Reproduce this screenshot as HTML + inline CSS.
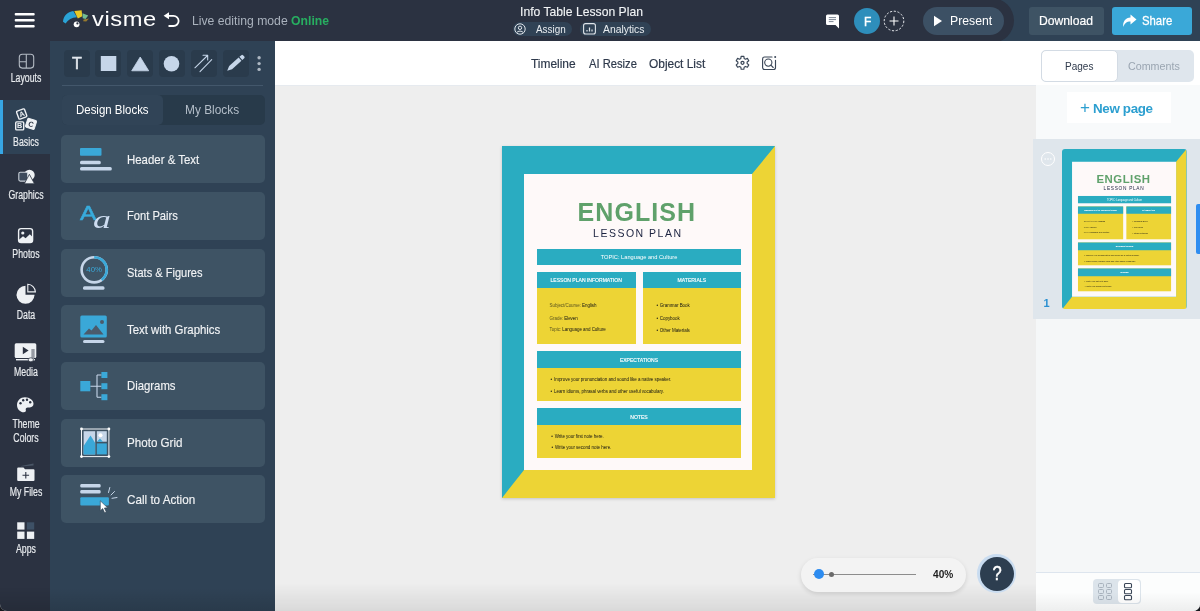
<!DOCTYPE html>
<html lang="en">
<head>
<meta charset="utf-8">
<title>Info Table Lesson Plan</title>
<style>
*{box-sizing:border-box;margin:0;padding:0}
html,body{width:1200px;height:611px;overflow:hidden;background:#16181d;font-family:"Liberation Sans",sans-serif;}
.abs{position:absolute}
#wrap{position:absolute;left:0;top:0;width:1200px;height:611px;will-change:transform}
#app{position:relative;width:1200px;height:611px;overflow:hidden;background:#eeeeee;border-radius:0 0 7px 7px}
/* top bar */
#top{position:absolute;left:0;top:0;width:1200px;height:41px;background:#2f4255;overflow:hidden}
#topdark{position:absolute;left:0;top:-2px;width:1013.5px;height:45px;background:#2b3241;border-radius:0 22.5px 22.5px 0}
.t{position:absolute;white-space:nowrap;line-height:1;transform-origin:0 0}
/* rail */
#rail{position:absolute;left:0;top:41px;width:50px;height:570px;background:#2b3241}
.rl{position:absolute;left:1.1px;width:50px;text-align:center;color:#e8ebee;font-size:12.5px;line-height:1;white-space:nowrap;transform:scaleX(.7);transform-origin:25px 50%;-webkit-text-stroke:.2px #e8ebee}
.bl{font-size:7px;font-weight:700;color:#eef1f4;width:6px;text-align:center}
/* panel */
#panel{position:absolute;left:50px;top:41px;width:225px;height:570px;background:#2f4255}
.tb{position:absolute;top:9px;width:26px;height:27px;border-radius:4px;background:#2a3b4c}
.blk{position:absolute;left:11px;width:203.5px;height:48px;border-radius:5px;background:#3e5364}
.blk span{position:absolute;left:65.8px;top:16.7px;font-size:12.7px;line-height:16px;color:#f1f3f5;white-space:nowrap;transform-origin:0 50%;-webkit-text-stroke:.15px #f1f3f5}
/* toolbar */
#bar{position:absolute;left:275px;top:41px;width:925px;height:44px;background:#fff}
#right{position:absolute;left:1036px;top:85px;width:164px;height:526px;background:#f5f7f8}
/* document */
.teal{background:#2aacc1}
.yel{background:#edd435}
.dw{color:#fff;text-align:center}
.db{font-size:4.5px;letter-spacing:-.05px;color:#141414}
.db i{font-style:normal;color:#5b5520;-webkit-text-stroke:0}
.db u{text-decoration:none;display:inline-block;width:3.4px}
.dt{position:absolute;white-space:nowrap;line-height:1;font-family:"Liberation Sans",sans-serif}
</style>
</head>
<body>
<div id="app"><div id="wrap">

<!-- TOP BAR -->
<div id="top"><div id="topdark"></div>
  <svg class="abs" style="left:14px;top:13px" width="22" height="15" viewBox="0 0 22 15"><rect x=".7" y="0" width="20" height="2.6" rx="1" fill="#fff"/><rect x=".7" y="6" width="20" height="2.6" rx="1" fill="#fff"/><rect x=".7" y="12" width="20" height="2.6" rx="1" fill="#fff"/></svg>
  <!-- logo -->
  <svg class="abs" style="left:60px;top:8px" width="32" height="22" viewBox="60 8 32 22">
    <path d="M63 21.8 C63.3 16 67.5 11.8 73.3 11 L77 17.3 C71.8 17.6 68 19.8 65.6 23.5 Z" fill="#2aa3d6"/>
    <path d="M74.3 10.9 L81.6 10.3 L82.3 16.2 L77.8 18.5 Z" fill="#e8c926"/>
    <path d="M82.5 13.3 L88.2 15.5 L85.6 19 L82.7 18.3 Z" fill="#74bd92"/>
    <path d="M83.6 19.4 L89 18.5 L86.3 21.6 L83.2 21.3 Z" fill="#96792f"/>
    <circle cx="76.6" cy="24.3" r="2.9" fill="#fff"/><circle cx="77.4" cy="23.4" r="1.1" fill="#2b3241"/>
  </svg>
  <div class="t" style="left:92.4px;top:9.8px;font-size:19.5px;color:#fff;letter-spacing:.5px;transform:scaleX(1.215)">visme</div>
  <svg class="abs" style="left:163px;top:12px" width="18" height="17" viewBox="0 0 18 17"><path d="M5 3.8 H10.5 A5 5 0 0 1 10.5 14 H5.5" fill="none" stroke="#fff" stroke-width="1.8"/><path d="M0.6 3.8 L6 0.3 V7.3 Z" fill="#fff"/></svg>
  <div class="t" style="left:191.6px;top:15px;font-size:12.7px;transform:scaleX(.962);color:#aab2bd">Live editing mode <b style="color:#27ae60">Online</b></div>

  <div class="t" style="left:519.6px;top:5.8px;font-size:12.8px;transform:scaleX(0.951);color:#f2f4f6;-webkit-text-stroke:.12px #f2f4f6">Info Table Lesson Plan</div>
  <div class="abs" style="left:513px;top:22px;width:59px;height:14px;border-radius:7px;background:#304255"></div>
  <div class="abs" style="left:580px;top:22px;width:71px;height:14px;border-radius:7px;background:#304255"></div>
  <svg class="abs" style="left:514px;top:23px" width="12" height="12" viewBox="0 0 12 12"><circle cx="6" cy="6" r="5.2" fill="none" stroke="#dfe4ea" stroke-width="1"/><circle cx="6" cy="4.8" r="1.7" fill="none" stroke="#dfe4ea" stroke-width="1"/><path d="M2.8 9.6 C3.5 7.6 8.5 7.6 9.2 9.6" fill="none" stroke="#dfe4ea" stroke-width="1"/></svg>
  <div class="t" style="left:536.3px;top:24px;font-size:10.5px;transform:scaleX(0.942);color:#e9edf1">Assign</div>
  <svg class="abs" style="left:583px;top:23px" width="13" height="12" viewBox="0 0 13 12"><rect x=".6" y=".6" width="11.8" height="10.4" rx="2" fill="none" stroke="#dfe4ea" stroke-width="1.1"/><path d="M4 8.5V7M6.5 8.5V4.5M9 8.5V6.5" stroke="#dfe4ea" stroke-width="1.2"/></svg>
  <div class="t" style="left:603px;top:24px;font-size:10.5px;transform:scaleX(0.987);color:#e9edf1">Analytics</div>

  <!-- comment icon -->
  <svg class="abs" style="left:826px;top:14px" width="14" height="15" viewBox="0 0 14 15"><path d="M1.5 0.5 H11.5 A1.5 1.5 0 0 1 13 2 V14.5 L9.5 11 H1.5 A1.5 1.5 0 0 1 0 9.5 V2 A1.5 1.5 0 0 1 1.5 .5Z" fill="#fff"/><path d="M2.8 3.6H10M2.8 5.6H10M2.8 7.6H7.5" stroke="#7d8794" stroke-width="1"/></svg>
  <div class="abs" style="left:854px;top:8px;width:26px;height:26px;border-radius:13px;background:#2e8ebb"></div>
  <div class="t" style="left:863.6px;top:14.8px;font-size:13px;font-weight:400;-webkit-text-stroke:.45px #fff;color:#fff;transform:scaleX(.92)">F</div>
  <svg class="abs" style="left:883px;top:10px" width="22" height="22" viewBox="0 0 22 22"><circle cx="11" cy="11" r="9.8" fill="none" stroke="#e6e9ed" stroke-width="1" stroke-dasharray="2.2 1.6"/><path d="M11 6.5V15.5M6.5 11H15.5" stroke="#fff" stroke-width="1.1"/></svg>
  <div class="abs" style="left:923px;top:7px;width:80.6px;height:28px;border-radius:14px;background:#3c5064"></div>
  <svg class="abs" style="left:933px;top:15px" width="10" height="12" viewBox="0 0 10 12"><path d="M1 .8 L9 6 L1 11.2Z" fill="#fff"/></svg>
  <div class="t" style="left:949.8px;top:15px;font-size:12.8px;transform:scaleX(0.958);color:#fff">Present</div>
  <div class="abs" style="left:1028.5px;top:7px;width:75.5px;height:27.6px;border-radius:3px;background:#3e5364"></div>
  <div class="t" style="left:1039.1px;top:15px;font-size:12.8px;transform:scaleX(0.949);color:#fff;-webkit-text-stroke:.2px #fff">Download</div>
  <div class="abs" style="left:1112px;top:7px;width:80px;height:28px;border-radius:3px;background:#3aa8d8"></div>
  <svg class="abs" style="left:1122px;top:14px" width="15" height="14" viewBox="0 0 15 14"><path d="M8.5 .5 L14.5 5.5 L8.5 10.5 V7.5 C4.5 7.5 2.5 9.5 1.2 13 C.6 7.5 3.5 3.8 8.5 3.5Z" fill="#fff"/></svg>
  <div class="t" style="left:1141.9px;top:15px;font-size:12.8px;transform:scaleX(0.885);-webkit-text-stroke:.3px #fff;color:#fff">Share</div>
</div>

<!-- RAIL -->
<div id="rail">
  <div class="abs" style="left:0;top:59px;width:50.5px;height:53.5px;background:#2f4255;border-left:3px solid #37a7e5"></div>
  <svg class="abs" style="left:0;top:0" width="50" height="570" viewBox="0 41 50 570">
    <!-- layouts -->
    <rect x="19.3" y="54.3" width="14.4" height="13.8" rx="3" fill="none" stroke="#b3bac3" stroke-width="1.1"/>
    <path d="M26.3 54.3 V68.1 M19.3 61.7 H26.3" stroke="#b3bac3" stroke-width="1.1" fill="none"/>
    <!-- basics -->
    <g font-family="Liberation Sans, sans-serif" font-weight="700" font-size="7.2" text-anchor="middle" transform="translate(0 .7)">
    <g transform="rotate(-20 21.7 113.3)"><rect x="17.5" y="109.1" width="8.4" height="8.4" rx="1" fill="#2f4255" stroke="#eef1f4" stroke-width="1.4"/><text x="21.7" y="115.9" fill="#eef1f4">A</text></g>
    <rect x="15.7" y="121.2" width="8" height="8" rx="1" fill="#2f4255" stroke="#eef1f4" stroke-width="1.4"/><text x="19.7" y="127.8" fill="#eef1f4">B</text>
    <g transform="rotate(18 31 123.2)"><rect x="26.4" y="118.6" width="9.2" height="9.2" rx="1.2" fill="#eef1f4" stroke="#eef1f4" stroke-width="1"/><text x="31" y="125.9" fill="#2b3241">C</text></g>
    </g>
    <!-- graphics -->
    <circle cx="29.4" cy="175.1" r="5.3" fill="#eef1f4"/>
    <rect x="18.8" y="172.3" width="8.8" height="8.8" rx="1.5" fill="#3d4a5c" stroke="#c9d0d8" stroke-width="1.1"/>
    <path d="M24.3 183.8 L29.4 174.3 L34.5 183.8Z" fill="#eef1f4" stroke="#2b3241" stroke-width=".8"/>
    <!-- photos -->
    <rect x="18.6" y="228.6" width="14" height="14" rx="2.5" fill="none" stroke="#eef1f4" stroke-width="1.4"/>
    <circle cx="22.8" cy="233" r="1.6" fill="#eef1f4"/>
    <path d="M18.6 240 L23 236.2 L25.6 238.3 L29.8 234.3 L32.6 237 V240.5 A2 2 0 0 1 30.6 242.6 H20.6 A2 2 0 0 1 18.6 240.5Z" fill="#eef1f4"/>
    <!-- data -->
    <path d="M25.5 285.8 A9 9 0 1 0 34.5 294.8 H25.5Z" fill="#eef1f4"/>
    <path d="M27.8 284.3 A8 8 0 0 1 35.4 291.9 H27.8Z" fill="#2b3241" stroke="#eef1f4" stroke-width="1.1"/>
    <!-- media -->
    <rect x="14.7" y="343.3" width="21.6" height="14.6" rx="1.5" fill="#eef1f4"/>
    <path d="M22.8 346.7 L28.6 350.5 L22.8 354.3Z" fill="#2b3241"/>
    <rect x="16" y="359" width="19" height="1.4" fill="#eef1f4"/>
    <path d="M33 349 V359.3" stroke="#2b3241" stroke-width="2.6"/>
    <path d="M33 348.5 V359.5" stroke="#eef1f4" stroke-width="1.1"/>
    <ellipse cx="30.8" cy="359.8" rx="2.6" ry="2" fill="#eef1f4" stroke="#2b3241" stroke-width=".7"/>
    <!-- theme colors -->
    <path d="M25 397.3 C20.3 397.3 17 400.8 17 405 C17 409.3 20.3 412.3 23.8 412.3 C25.6 412.3 26.2 411.2 25.8 410 C25.3 408.5 26.3 407.4 27.8 407.4 H29.8 C32.2 407.4 33.5 405.8 33.5 403.8 C33.5 400.3 29.8 397.3 25 397.3Z" fill="#eef1f4"/>
    <g fill="#2b3241"><circle cx="20.5" cy="403.3" r="1.2"/><circle cx="23.2" cy="400.3" r="1.2"/><circle cx="27" cy="399.8" r="1.2"/><circle cx="30.2" cy="402.3" r="1.2"/></g>
    <!-- my files -->
    <path d="M21 466 L33.5 463.5 V465.5 L21 466.6Z" fill="#4a5666"/>
    <path d="M17.2 468.5 A1 1 0 0 1 18.2 467.5 H23.5 L25 469.3 H33.5 A1 1 0 0 1 34.5 470.3 V480 A1 1 0 0 1 33.5 481 H18.2 A1 1 0 0 1 17.2 480Z" fill="#eef1f4"/>
    <path d="M25.8 472 V478.6 M22.5 475.3 H29.1" stroke="#2b3241" stroke-width="1.1"/>
    <!-- apps -->
    <rect x="17.2" y="522.3" width="7.3" height="7.3" fill="#eef1f4"/>
    <rect x="26.9" y="522.3" width="7.3" height="7.3" fill="#3e5166"/>
    <rect x="17.2" y="531.6" width="7.3" height="7.3" fill="#eef1f4"/>
    <rect x="26.9" y="531.6" width="7.3" height="7.3" fill="#eef1f4"/>
  </svg>
  <div class="rl" style="top:31.3px">Layouts</div>
  <div class="rl" style="top:95.2px">Basics</div>
  <div class="rl" style="top:147.8px">Graphics</div>
  <div class="rl" style="top:207.3px">Photos</div>
  <div class="rl" style="top:267.9px">Data</div>
  <div class="rl" style="top:325.3px">Media</div>
  <div class="rl" style="top:377.3px">Theme</div>
  <div class="rl" style="top:391.3px">Colors</div>
  <div class="rl" style="top:445.3px">My Files</div>
  <div class="rl" style="top:502.3px">Apps</div>
</div>

<!-- PANEL -->
<div id="panel">
  <div class="tb" style="left:13.5px"></div>
  <div class="tb" style="left:45.4px"></div>
  <div class="tb" style="left:77.3px"></div>
  <div class="tb" style="left:109.2px"></div>
  <div class="tb" style="left:141.1px"></div>
  <div class="tb" style="left:173px"></div>
  <div class="t" style="left:21.5px;top:14px;font-size:17px;font-weight:400;-webkit-text-stroke:.55px #e3e8ee;color:#e3e8ee;transform:scaleX(.95)">T</div>
  <svg class="abs" style="left:45px;top:9px" width="170" height="28" viewBox="0 0 170 28">
    <rect x="5.8" y="6" width="15.5" height="15" fill="#c6d6e9"/>
    <path d="M36.7 20.8 L45.2 7 L53.7 20.8Z" fill="#c6d6e9" stroke="#c6d6e9" stroke-width=".8" stroke-linejoin="round"/>
    <circle cx="76.5" cy="13.8" r="7.8" fill="#c6d6e9"/>
    <path d="M99.9 17.8 L112.5 5.5 M105 21.7 L116.7 9.6 M108 5.3 H112.7 V10" fill="none" stroke="#c6d6e9" stroke-width="1.05" stroke-linecap="round" stroke-linejoin="round"/>
    <g transform="translate(132.2 20.8) rotate(-42.1)" fill="#c6d6e9"><path d="M0 0 L4.6 -2.15 H17.3 V2.15 H4.6Z"/><path d="M18.4 -2.15 H21 A1.2 1.2 0 0 1 22.2 -.95 V.95 A1.2 1.2 0 0 1 21 2.15 H18.4Z"/></g>
    <g fill="#aeb8c3"><circle cx="164.1" cy="7.8" r="1.7"/><circle cx="164.1" cy="13.6" r="1.7"/><circle cx="164.1" cy="19.4" r="1.7"/></g>
  </svg>
  <div class="abs" style="left:12px;top:44px;width:201px;height:1px;background:#43576b"></div>
  <div class="abs" style="left:12.3px;top:54.3px;width:202.4px;height:29.5px;border-radius:5px;background:#283a4a"></div>
  <div class="abs" style="left:12.3px;top:54.3px;width:101px;height:29.5px;border-radius:5px;background:#314457"></div>
  <div class="t" style="left:26.2px;top:62.5px;font-size:12.7px;transform:scaleX(0.903);color:#fff">Design Blocks</div>
  <div class="t" style="left:135.2px;top:62.5px;font-size:12.7px;transform:scaleX(0.937);color:#b4bec9">My Blocks</div>

  <div class="blk" style="top:94.2px"><span style="transform:scaleX(0.901)">Header &amp; Text</span></div>
  <div class="blk" style="top:150.8px"><span style="transform:scaleX(0.879)">Font Pairs</span></div>
  <div class="blk" style="top:207.6px"><span style="transform:scaleX(0.871)">Stats &amp; Figures</span></div>
  <div class="blk" style="top:264.2px"><span style="transform:scaleX(0.900)">Text with Graphics</span></div>
  <div class="blk" style="top:320.8px"><span style="transform:scaleX(0.894)">Diagrams</span></div>
  <div class="blk" style="top:377.6px"><span style="transform:scaleX(0.915)">Photo Grid</span></div>
  <div class="blk" style="top:434.2px"><span style="transform:scaleX(0.921)">Call to Action</span></div>
  <div class="t" style="left:30.2px;top:161px;font-size:21px;color:#38acdd;-webkit-text-stroke:.55px #38acdd;transform:scaleX(1.17)">A</div>
  <div class="t" style="left:42.6px;top:165.7px;font-size:25.5px;font-style:italic;font-family:'Liberation Serif',serif;color:#cddcf0;transform:scaleX(1.4)">a</div>
  <div class="t" style="left:33.4px;top:224.9px;font-size:7.8px;color:#3aa8d8;width:21.5px;text-align:center">40%</div>
  <svg class="abs" style="left:0;top:0" width="225" height="570" viewBox="50 41 225 570">
    <!-- header & text -->
    <rect x="80" y="148" width="21.5" height="7.8" rx="1" fill="#3aa8d8"/>
    <rect x="80" y="160.7" width="20.8" height="3.5" rx="1.5" fill="#c6d6e9"/>
    <rect x="80" y="167" width="31.8" height="3.5" rx="1.5" fill="#c6d6e9"/>
    <!-- stats -->
    <circle cx="94.2" cy="269.8" r="12.6" fill="none" stroke="#c6d6e9" stroke-width="2.6"/>
    <path d="M94.2 257.2 A12.6 12.6 0 0 1 101.6 280" fill="none" stroke="#3aa8d8" stroke-width="2.6"/>
    <rect x="83" y="286.2" width="21.5" height="3.5" rx="1.5" fill="#c6d6e9"/>
    <!-- text with graphics -->
    <rect x="80.3" y="315.5" width="26.5" height="22" rx="1.5" fill="#3aa8d8"/>
    <path d="M83.5 334.5 L89 328.5 L91.5 330.5 L96 325 L103.5 334.5Z" fill="#4b5b6c"/>
    <circle cx="102" cy="322" r="2" fill="#4b5b6c"/>
    <rect x="83" y="340" width="21.5" height="3" rx="1.5" fill="#c6d6e9"/>
    <!-- diagrams -->
    <path d="M90.3 386.2 H101.5 M97 375 H101.5 M97 397.2 H101.5 M97 375 V397.2" fill="none" stroke="#c6d6e9" stroke-width="1.1"/>
    <rect x="80.3" y="381" width="10" height="10.3" fill="#3aa8d8"/>
    <rect x="101.4" y="372" width="6" height="6" fill="#3aa8d8"/>
    <rect x="101.4" y="383.2" width="6" height="6" fill="#3aa8d8"/>
    <rect x="101.4" y="394.2" width="6" height="6" fill="#3aa8d8"/>
    <!-- photo grid -->
    <rect x="81.5" y="429" width="27.4" height="27.6" fill="none" stroke="#f2f5f8" stroke-width="1"/>
    <rect x="83.6" y="431.2" width="11.6" height="23.2" fill="#c6d6e9"/>
    <path d="M83.6 454.4 V446 L90.5 435.5 L95.2 443 V454.4Z" fill="#3aa8d8"/>
    <rect x="96.8" y="431.2" width="10" height="10.5" fill="#c6d6e9"/>
    <circle cx="100.5" cy="435.3" r="2" fill="#fff"/>
    <path d="M96.8 441.7 L100 438.5 L103 441.7Z" fill="#3aa8d8"/>
    <rect x="96.8" y="443.4" width="10" height="11" fill="#3aa8d8"/>
    <g fill="#fff"><circle cx="81.5" cy="429" r="1.4"/><circle cx="108.9" cy="429" r="1.4"/><circle cx="81.5" cy="456.6" r="1.4"/><circle cx="108.9" cy="456.6" r="1.4"/></g>
    <!-- call to action -->
    <rect x="80.3" y="484" width="20.3" height="3.4" rx="1.2" fill="#c6d6e9"/>
    <rect x="80.3" y="490" width="20.3" height="3.4" rx="1.2" fill="#c6d6e9"/>
    <rect x="80.3" y="497.2" width="28.6" height="8.3" rx="1" fill="#3aa8d8"/>
    <path d="M108.5 492.5 L109.8 487.5 M111 495 L114.5 491.5 M112 498.3 L117 497.5" stroke="#c6d6e9" stroke-width="1" stroke-linecap="round"/>
    <path d="M100.3 500.8 L100.3 510.8 L102.7 508.6 L104.6 512.8 L106.3 512 L104.4 508 L107.6 507.8Z" fill="#fff" stroke="#2c3e4f" stroke-width=".6"/>
  </svg>
</div>

<!-- TOOLBAR -->
<div id="bar">
  <div class="t" style="left:256.4px;top:16.6px;font-size:12.7px;transform:scaleX(0.94);color:#2f3a4c;-webkit-text-stroke:.2px #2f3a4c">Timeline</div>
  <div class="t" style="left:313.7px;top:16.6px;font-size:12.7px;transform:scaleX(0.882);color:#2f3a4c;-webkit-text-stroke:.2px #2f3a4c">AI Resize</div>
  <div class="t" style="left:374px;top:16.6px;font-size:12.7px;transform:scaleX(0.938);color:#2f3a4c;-webkit-text-stroke:.2px #2f3a4c">Object List</div>
  <svg class="abs" style="left:0;top:0" width="925" height="44" viewBox="275 41 925 44">
    <path d="M741.13 56.34 L743.87 56.34 L744.14 58.39 L745.5 59.18 L747.4 58.38 L748.78 60.76 L747.13 62.02 L747.13 63.58 L748.78 64.84 L747.4 67.22 L745.5 66.42 L744.14 67.21 L743.87 69.26 L741.13 69.26 L740.86 67.21 L739.5 66.42 L737.6 67.22 L736.22 64.84 L737.87 63.58 L737.87 62.02 L736.22 60.76 L737.6 58.38 L739.5 59.18 L740.86 58.39Z" fill="none" stroke="#3a4657" stroke-width="1.15" stroke-linejoin="round"/>
    <circle cx="742.5" cy="62.8" r="1.5" fill="none" stroke="#3a4657" stroke-width="1.3"/>
    <path d="M772 57 H764.6 A2 2 0 0 0 762.6 59 V67.5 A2 2 0 0 0 764.6 69.5 H773.5 A2 2 0 0 0 775.5 67.5 V60.2" fill="none" stroke="#3a4657" stroke-width="1.15" stroke-linecap="round"/>
    <circle cx="775.2" cy="57" r="1" fill="#3a4657"/>
    <circle cx="768.3" cy="62.6" r="3.6" fill="none" stroke="#3a4657" stroke-width="1.1"/>
    <path d="M770.9 65.2 L773.2 67.5" stroke="#3a4657" stroke-width="1.1" stroke-linecap="round"/>
  </svg>
</div>

<div class="abs" style="left:275px;top:85px;width:761px;height:1px;background:#e6eaef"></div>
<!-- RIGHT PANEL -->
<div id="right">
  <div class="abs" style="left:0;top:0;width:164px;height:54px;background:#f8fafb"></div>
  <div class="abs" style="left:-3px;top:54px;width:167px;height:179.5px;background:#dfe6ec"></div>
  <div class="abs" style="left:30.5px;top:6.7px;width:104px;height:31.3px;background:#fff"></div>
  <div class="t" style="left:44px;top:13.6px;font-size:13.4px;font-weight:700;color:#2c9fd0;letter-spacing:-.35px"><span style="font-weight:400;font-size:17px;position:relative;top:.8px;margin-right:3.4px">+</span>New page</div>
  <svg class="abs" style="left:4px;top:66px" width="16" height="16" viewBox="0 0 16 16"><circle cx="8" cy="8" r="6.5" fill="none" stroke="#fff" stroke-width="1"/><circle cx="5.2" cy="8" r=".8" fill="#fff"/><circle cx="8" cy="8" r=".8" fill="#fff"/><circle cx="10.8" cy="8" r=".8" fill="#fff"/></svg>
  <div class="t" style="left:7.5px;top:212.5px;font-size:11px;font-weight:700;color:#2b90d1">1</div>
  <div class="abs" style="left:160px;top:118.5px;width:4px;height:50px;border-radius:2px 0 0 2px;background:#2f8df0"></div>
  <div class="abs" style="left:0;top:487px;width:164px;height:39px;background:#fcfdfd;border-top:1px solid #dde5ee"></div>
  <div class="abs" style="left:57px;top:494px;width:47.5px;height:24.5px;border-radius:4px;background:#dce4eb"></div>
  <div class="abs" style="left:81.5px;top:495px;width:22px;height:22.5px;border-radius:4px;background:#fff"></div>
  <svg class="abs" style="left:57px;top:494px" width="48" height="25" viewBox="0 0 48 25">
    <g fill="none" stroke="#a9b3be" stroke-width="1"><rect x="5.5" y="4.5" width="5" height="4" rx="1"/><rect x="13.5" y="4.5" width="5" height="4" rx="1"/><rect x="5.5" y="10.5" width="5" height="4" rx="1"/><rect x="13.5" y="10.5" width="5" height="4" rx="1"/><rect x="5.5" y="16.5" width="5" height="4" rx="1"/><rect x="13.5" y="16.5" width="5" height="4" rx="1"/></g>
    <g fill="none" stroke="#3a4657" stroke-width="1.1"><rect x="31.5" y="4.5" width="7" height="4.2" rx="1"/><rect x="31.5" y="10.5" width="7" height="4.2" rx="1"/><rect x="31.5" y="16.5" width="7" height="4.2" rx="1"/></g>
  </svg>
</div>
<!-- tabs -->
<div class="abs" style="left:1040.7px;top:50.2px;width:153.3px;height:31.6px;border-radius:5px;background:#dfe6ed"></div>
<div class="abs" style="left:1040.7px;top:50.2px;width:77.7px;height:31.6px;border-radius:5px;background:#fff;border:1px solid #d3dbe4"></div>
<div class="t" style="left:1065px;top:61.2px;font-size:10.5px;transform:scaleX(0.954);color:#2f3a4c">Pages</div>
<div class="t" style="left:1128.3px;top:61.2px;font-size:10.5px;transform:scaleX(1.02);color:#9aa5b1">Comments</div>

<!-- bottom controls -->
<div class="abs" style="left:275px;top:583px;width:761px;height:28px;background:linear-gradient(rgba(0,0,0,0),rgba(0,0,0,.085))"></div>
<div class="abs" style="left:1036px;top:592px;width:164px;height:19px;background:linear-gradient(rgba(0,0,0,0),rgba(0,0,0,.06))"></div>
<div class="abs" style="left:0;top:588px;width:275px;height:23px;background:linear-gradient(rgba(0,0,0,0),rgba(0,0,0,.12))"></div>
<div class="abs" style="left:800.5px;top:558px;width:165px;height:33.5px;border-radius:17px;background:#f3f3f3;box-shadow:0 2px 5px rgba(0,0,0,.13)"></div>
<div class="abs" style="left:813px;top:573.9px;width:103px;height:1px;background:#8c8c8c"></div>
<div class="abs" style="left:813.6px;top:569.4px;width:10px;height:10px;border-radius:5px;background:#2d8cf0"></div>
<div class="abs" style="left:829.2px;top:572px;width:4.8px;height:4.8px;border-radius:3px;background:#6a6a6a"></div>
<div class="t" style="left:932.5px;top:568.5px;font-size:11.5px;font-weight:700;color:#1c1c1c;transform:scaleX(.88);transform-origin:0 0">40%</div>
<div class="abs" style="left:977.1px;top:554.1px;width:39px;height:39px;border-radius:20px;background:#c9dcf0"></div>
<div class="abs" style="left:979.6px;top:556.6px;width:34px;height:34px;border-radius:17px;background:#2d3e50"></div>
<div class="t" style="left:990.5px;top:563.5px;font-size:19.5px;font-weight:400;-webkit-text-stroke:.45px #fff;color:#fff;width:12px;text-align:center;transform:scaleX(.85);transform-origin:50% 50%">?</div>


<!-- DOCUMENT -->
<div id="doc" class="abs teal" style="left:502px;top:146px;width:273px;height:352px;box-shadow:0 1px 3px rgba(0,0,0,.18)">
<div class="abs yel" style="left:0;top:0;width:273px;height:352px;clip-path:polygon(100% 0,100% 100%,0 100%,22px 324px,250px 324px,250px 28px)"></div>
<div class="abs" style="left:22px;top:28px;width:228px;height:295.5px;background:#fef9f9"></div>
<div class="dt" style="left:0;width:272px;text-align:center;top:54px;font-size:25px;font-weight:700;color:#5fa16b;letter-spacing:1.05px;text-indent:-2.4px">ENGLISH</div>
<div class="dt" style="left:0;width:272px;text-align:center;top:82px;font-size:10.5px;color:#1c2340;letter-spacing:1.5px;text-indent:-.4px">LESSON PLAN</div>
<div class="abs teal" style="left:35px;top:102.6px;width:204px;height:16px"></div>
<div class="dt dw" style="left:35px;width:204px;top:109px;font-size:5.7px">TOPIC: Language and Culture</div>
<div class="abs yel" style="left:35px;top:125.7px;width:98.8px;height:72.3px"></div>
<div class="abs teal" style="left:35px;top:125.7px;width:98.8px;height:16.4px"></div>
<div class="dt dw" style="left:35px;width:98.4px;top:132.2px;font-size:5.05px;-webkit-text-stroke:.15px #fff">LESSON PLAN INFORMATION</div>
<div class="abs yel" style="left:140.6px;top:125.7px;width:98.4px;height:72.3px"></div>
<div class="abs teal" style="left:140.6px;top:125.7px;width:98.4px;height:16.4px"></div>
<div class="dt dw" style="left:140.6px;width:98.4px;top:132.2px;font-size:5.1px;-webkit-text-stroke:.15px #fff">MATERIALS</div>
<div class="dt db" style="left:47.6px;top:157.5px"><i>Subject/Course:</i> English</div>
<div class="dt db" style="left:47.6px;top:171.2px"><i>Grade:</i> Eleven</div>
<div class="dt db" style="left:47.6px;top:182.2px"><i>Topic:</i> Language and Culture</div>
<div class="dt db" style="left:154.4px;top:158.2px"><u>&bull;</u>Grammar Book</div>
<div class="dt db" style="left:154.4px;top:171.1px"><u>&bull;</u>Copybook</div>
<div class="dt db" style="left:154.4px;top:183.1px"><u>&bull;</u>Other Materials</div>
<div class="abs yel" style="left:35px;top:205px;width:204px;height:50px"></div>
<div class="abs teal" style="left:35px;top:205px;width:204px;height:17.4px"></div>
<div class="dt dw" style="left:35px;width:204px;top:212.3px;font-size:5.05px;-webkit-text-stroke:.15px #fff">EXPECTATIONS</div>
<div class="dt db" style="left:48.6px;top:231.5px"><u>&bull;</u>Improve your pronunciation and sound like a native speaker.</div>
<div class="dt db" style="left:48.6px;top:244px"><u>&bull;</u>Learn idioms, phrasal verbs and other useful vocabulary.</div>
<div class="abs yel" style="left:35px;top:262.2px;width:204px;height:49.8px"></div>
<div class="abs teal" style="left:35px;top:262.2px;width:204px;height:16.5px"></div>
<div class="dt dw" style="left:35px;width:204px;top:269.4px;font-size:5.05px;-webkit-text-stroke:.15px #fff">NOTES</div>
<div class="dt db" style="left:49.3px;top:288.9px"><u>&bull;</u>Write your first note here.</div>
<div class="dt db" style="left:49.6px;top:300.2px"><u>&bull;</u>Write your second note here.</div>
</div>

<!-- /DOC -->
<!-- THUMB --><div class="abs" style="left:1062px;top:148.5px;width:124.6px;height:160.5px;border-radius:3px;overflow:hidden"><div class="abs teal" style="left:0;top:0;width:273px;height:352px;transform:scale(.4564,.456);transform-origin:0 0">
<div class="abs yel" style="left:0;top:0;width:273px;height:352px;clip-path:polygon(100% 0,100% 100%,0 100%,22px 324px,250px 324px,250px 28px)"></div>
<div class="abs" style="left:22px;top:28px;width:228px;height:295.5px;background:#fef9f9"></div>
<div class="dt" style="left:0;width:272px;text-align:center;top:54px;font-size:25px;font-weight:700;color:#5fa16b;letter-spacing:1.05px;text-indent:-2.4px">ENGLISH</div>
<div class="dt" style="left:0;width:272px;text-align:center;top:82px;font-size:10.5px;color:#1c2340;letter-spacing:1.5px;text-indent:-.4px">LESSON PLAN</div>
<div class="abs teal" style="left:35px;top:102.6px;width:204px;height:16px"></div>
<div class="dt dw" style="left:35px;width:204px;top:109px;font-size:5.7px">TOPIC: Language and Culture</div>
<div class="abs yel" style="left:35px;top:125.7px;width:98.8px;height:72.3px"></div>
<div class="abs teal" style="left:35px;top:125.7px;width:98.8px;height:16.4px"></div>
<div class="dt dw" style="left:35px;width:98.4px;top:132.2px;font-size:5.05px;-webkit-text-stroke:.15px #fff">LESSON PLAN INFORMATION</div>
<div class="abs yel" style="left:140.6px;top:125.7px;width:98.4px;height:72.3px"></div>
<div class="abs teal" style="left:140.6px;top:125.7px;width:98.4px;height:16.4px"></div>
<div class="dt dw" style="left:140.6px;width:98.4px;top:132.2px;font-size:5.1px;-webkit-text-stroke:.15px #fff">MATERIALS</div>
<div class="dt db" style="left:47.6px;top:157.5px"><i>Subject/Course:</i> English</div>
<div class="dt db" style="left:47.6px;top:171.2px"><i>Grade:</i> Eleven</div>
<div class="dt db" style="left:47.6px;top:182.2px"><i>Topic:</i> Language and Culture</div>
<div class="dt db" style="left:154.4px;top:158.2px"><u>&bull;</u>Grammar Book</div>
<div class="dt db" style="left:154.4px;top:171.1px"><u>&bull;</u>Copybook</div>
<div class="dt db" style="left:154.4px;top:183.1px"><u>&bull;</u>Other Materials</div>
<div class="abs yel" style="left:35px;top:205px;width:204px;height:50px"></div>
<div class="abs teal" style="left:35px;top:205px;width:204px;height:17.4px"></div>
<div class="dt dw" style="left:35px;width:204px;top:212.3px;font-size:5.05px;-webkit-text-stroke:.15px #fff">EXPECTATIONS</div>
<div class="dt db" style="left:48.6px;top:231.5px"><u>&bull;</u>Improve your pronunciation and sound like a native speaker.</div>
<div class="dt db" style="left:48.6px;top:244px"><u>&bull;</u>Learn idioms, phrasal verbs and other useful vocabulary.</div>
<div class="abs yel" style="left:35px;top:262.2px;width:204px;height:49.8px"></div>
<div class="abs teal" style="left:35px;top:262.2px;width:204px;height:16.5px"></div>
<div class="dt dw" style="left:35px;width:204px;top:269.4px;font-size:5.05px;-webkit-text-stroke:.15px #fff">NOTES</div>
<div class="dt db" style="left:49.3px;top:288.9px"><u>&bull;</u>Write your first note here.</div>
<div class="dt db" style="left:49.6px;top:300.2px"><u>&bull;</u>Write your second note here.</div>
</div></div><!-- /THUMB -->

</div></div>
</body>
</html>
